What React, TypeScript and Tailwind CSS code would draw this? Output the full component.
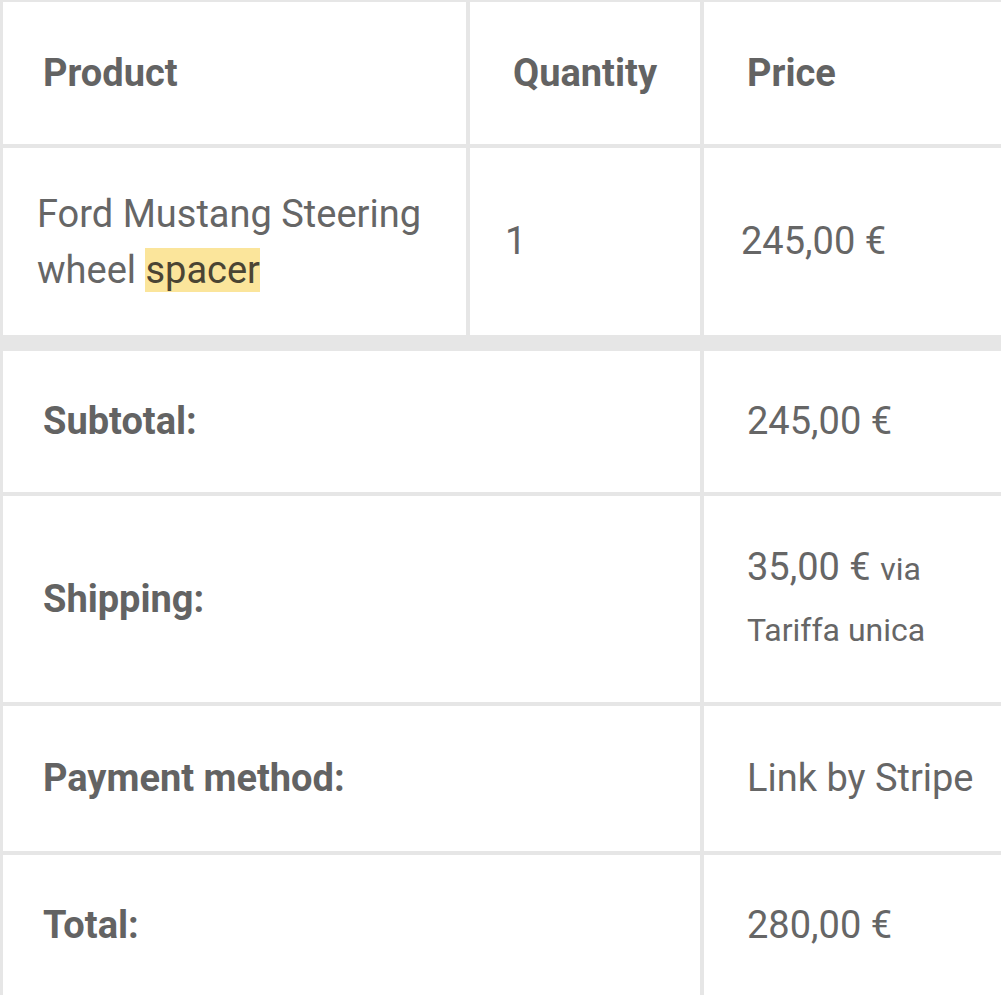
export default function App() {
  const th = "bg-white flex items-center font-bold text-[38px] text-[#636363]";
  const td = "bg-white flex items-center text-[38px] text-[#666666]";
  return (
    <div
      className="w-[1001px] h-[995px] overflow-hidden bg-white"
      style={{ fontFamily: "Roboto, 'Noto Sans', sans-serif" }}
    >
      <div className="bg-[#e6e6e6] pl-[3px] pt-[2px] grid grid-cols-[463px_230px_1fr] gap-x-[4px]">
        {/* header */}
        <div className={`${th} h-[142px] pl-[40px]`}>Product</div>
        <div className={`${th} h-[142px] pl-[43px]`}>Quantity</div>
        <div className={`${th} h-[142px] pl-[43px]`}>Price</div>

        {/* product row */}
        <div className={`${td} h-[187px] mt-[4px] pl-[34px] leading-[56px]`}>
          <div>
            Ford Mustang Steering
            <br />
            wheel <mark className="bg-[#fbe59b] text-[#4a4433]">spacer</mark>
          </div>
        </div>
        <div className={`${td} h-[187px] mt-[4px] pl-[35px]`}>1</div>
        <div className={`${td} h-[187px] mt-[4px] pl-[37px]`}>245,00 €</div>

        {/* subtotal */}
        <div className={`${th} col-span-2 h-[141px] mt-[16px] pl-[40px]`}>Subtotal:</div>
        <div className={`${td} h-[141px] mt-[16px] pl-[43px]`}>245,00 €</div>

        {/* shipping */}
        <div className={`${th} col-span-2 h-[206px] mt-[4px] pl-[40px]`}>Shipping:</div>
        <div className={`${td} h-[206px] mt-[4px] pl-[43px]`}>
          <div>
            <div className="leading-[60px]">
              35,00 €&nbsp;<span className="text-[32px]">via</span>
            </div>
            <div className="text-[32px] leading-[62px]">Tariffa unica</div>
          </div>
        </div>

        {/* payment */}
        <div className={`${th} col-span-2 h-[145px] mt-[4px] pl-[40px]`}>Payment method:</div>
        <div className={`${td} h-[145px] mt-[4px] pl-[43px]`}>Link by Stripe</div>

        {/* total */}
        <div className={`${th} col-span-2 h-[141px] mt-[4px] pl-[40px]`}>Total:</div>
        <div className={`${td} h-[141px] mt-[4px] pl-[43px]`}>280,00 €</div>
      </div>
    </div>
  );
}
